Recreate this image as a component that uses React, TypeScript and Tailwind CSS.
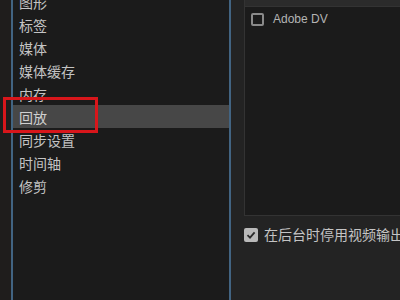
import React from 'react';

const items = ['图形', '标签', '媒体', '媒体缓存', '内存', '回放', '同步设置', '时间轴', '修剪'];

export default function App() {
  const selected = '回放';

  return (
    <div
      className="relative flex w-[400px] h-[300px] overflow-hidden bg-[#202020] text-[#c8c8c8]"
      style={{ fontFamily: '"Noto Sans CJK SC", "Noto Sans", sans-serif' }}
    >
      {/* outer gutter */}
      <div className="w-[11px] shrink-0 bg-[#1f1d1c]" />

      {/* category list */}
      <div className="w-[220px] shrink-0 border-x-2 border-[#426482] bg-[#1b1b1b]">
        <div className="-mt-[10px] flex flex-col">
          {items.map((it) => (
            <div
              key={it}
              className={`h-[23px] flex items-center pl-[6px] text-[14px] leading-none ${
                it === selected ? 'bg-[#474747] text-[#d0d0d0]' : 'text-[#c4c4c4]'
              }`}
            >
              {it}
            </div>
          ))}
        </div>
      </div>

      {/* settings area */}
      <div className="flex-1 flex flex-col bg-[#232323] pl-[13px]">
        <div className="h-[216px] flex flex-col border-l border-b border-[#333333] bg-[#1b1b1b]">
          <div className="h-[7px] bg-[#2b2b2b] border-b border-[#333333]" />
          <div className="flex items-center gap-[9px] pl-[6px] mt-[3px]">
            <div className="w-[13px] h-[13px] border-2 border-[#8a8a8a] rounded-[2px]" />
            <span className="text-[12px] text-[#b4b4b4]" style={{ fontFamily: '"Liberation Sans", sans-serif' }}>
              Adobe DV
            </span>
          </div>
        </div>
        <div className="flex items-center gap-[6px] mt-[8px] whitespace-nowrap">
          <div className="w-[14px] h-[14px] shrink-0 rounded-[2px] bg-[#b9b9b9] flex items-center justify-center">
            <svg width="10" height="10" viewBox="0 0 10 10">
              <path d="M1.5 5.2 L4 7.6 L8.6 2.4" fill="none" stroke="#2a2a2a" strokeWidth="1.8" />
            </svg>
          </div>
          <span className="text-[14px] text-[#c4c4c4]">在后台时停用视频输出</span>
        </div>
      </div>

      {/* red annotation box */}
      <div className="absolute left-[3px] top-[97px] w-[95px] h-[36px] border-[3px] border-[#d8161b]" />
    </div>
  );
}
